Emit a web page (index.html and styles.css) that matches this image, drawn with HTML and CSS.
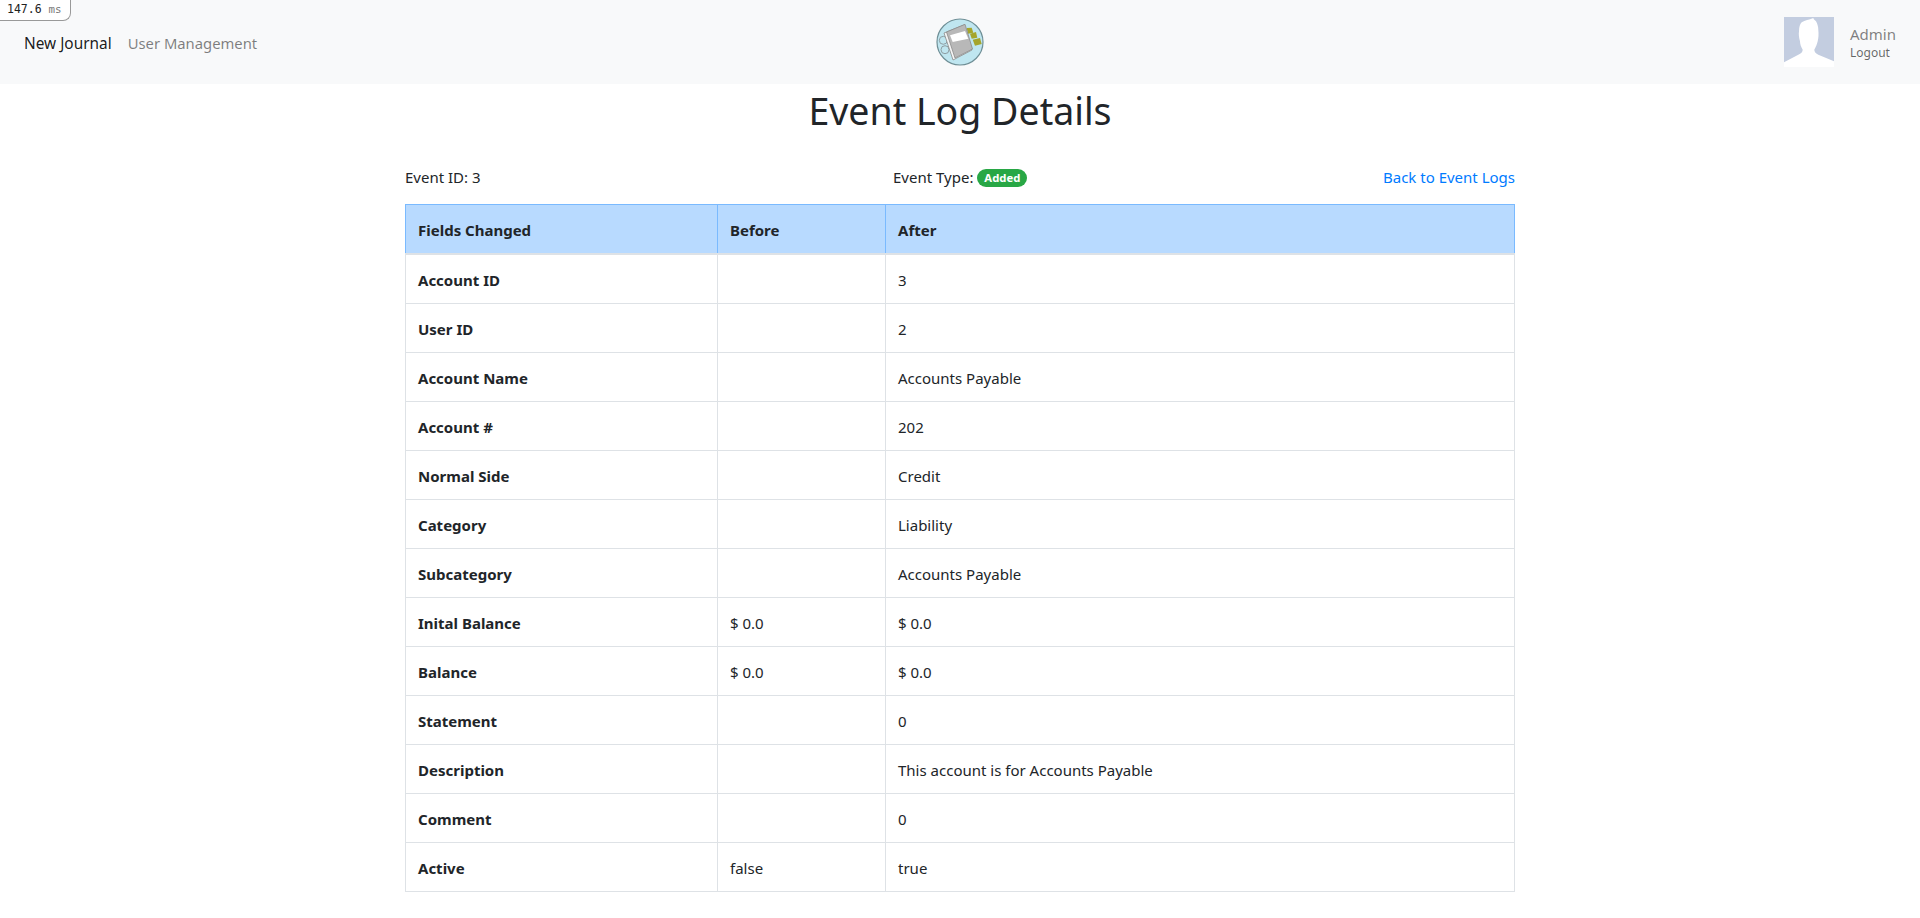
FILE: index.html
```html
<!DOCTYPE html>
<html lang="en">
  <head>
    <meta charset="UTF-8" />
    <title>Event Log Details</title>
    <link rel="stylesheet" href="styles.css">
  </head>
  <body>
    <div class="timer"><span class="timer-value">147.6</span> <span class="timer-unit">ms</span></div>
    <nav class="navbar">
      <ul class="nav-links">
        <li><a class="nav-link active" href="#">New Journal</a></li>
        <li><a class="nav-link" href="#">User Management</a></li>
      </ul>
      <a class="brand" href="#" aria-label="Home">
        <svg viewBox="0 0 48 48" width="48" height="48">
          <circle cx="24" cy="24" r="23" fill="#bfe6f0" stroke="#6f8f96" stroke-width="1.2" />
          <g fill="none" stroke="#8f9ea3" stroke-width="1">
            <circle cx="7.300" cy="22.300" r="4" />
            <circle cx="9" cy="31.700" r="4" />
          </g>
          <path d="M30.700 10 L35.700 9.700 L37.300 14.700 L32 15.700 Z" fill="#a5a52c" />
          <path d="M34 15.700 L40 14 L41.300 19.700 L35.700 20.700 Z" fill="#a5a52c" />
          <path d="M36.700 21.700 L44 20 L45.700 26 L39 27.700 Z" fill="#a5a52c" />
          <path d="M8 15 L28 7 L36 32 L17 42 Z" fill="#f4f4f4" stroke="#8a8a8a" stroke-width="0.8" />
          <path d="M10.500 14 L29 6.300 L36.500 31 L19 40 Z" fill="#b8b8b8" stroke="#8a8a8a" stroke-width="0.8" />
          <path d="M14 17.300 L29 13 L32.300 20.700 L16.700 24 Z" fill="#fff" />
        </svg>
      </a>
      <div class="user">
        <svg class="avatar" viewBox="0 0 50 50" width="50" height="50">
          <rect width="50" height="50" fill="#c3cde0" />
          <path d="M0 50 V45.300 L14.300 37.700 C17 36.500 18.700 35 18.700 32.700 C17 30 16 27 16 24.300 C15 21 14.500 17 15 14.300 C15 10 16 7 17.700 5.300 C21 3 25 3 29.300 1 C29.500 2.500 31 3 32 4.300 C33.500 7 34.300 10 34.300 12.700 C34.800 17 34.500 21 33.700 24.300 C33 27 32 30 30.300 32.700 C30.300 35 32 36.500 34.300 37.700 L50 44.300 V50 Z" fill="#fff" />
        </svg>
        <div class="user-text">
          <div class="user-name">Admin</div>
          <a class="user-logout" href="#">Logout</a>
        </div>
      </div>
    </nav>
    <main class="container">
      <h1>Event Log Details</h1>
      <div class="info-row">
        <div>Event ID: 3</div>
        <div>Event Type: <span class="badge">Added</span></div>
        <a class="back-link" href="#">Back to Event Logs</a>
      </div>
      <table class="log-table">
        <thead>
          <tr>
            <th class="col-field">Fields Changed</th>
            <th class="col-before">Before</th>
            <th>After</th>
          </tr>
        </thead>
        <tbody>
          <tr><th>Account ID</th><td></td><td>3</td></tr>
          <tr><th>User ID</th><td></td><td>2</td></tr>
          <tr><th>Account Name</th><td></td><td>Accounts Payable</td></tr>
          <tr><th>Account #</th><td></td><td>202</td></tr>
          <tr><th>Normal Side</th><td></td><td>Credit</td></tr>
          <tr><th>Category</th><td></td><td>Liability</td></tr>
          <tr><th>Subcategory</th><td></td><td>Accounts Payable</td></tr>
          <tr><th>Inital Balance</th><td>$ 0.0</td><td>$ 0.0</td></tr>
          <tr><th>Balance</th><td>$ 0.0</td><td>$ 0.0</td></tr>
          <tr><th>Statement</th><td></td><td>0</td></tr>
          <tr><th>Description</th><td></td><td>This account is for Accounts Payable</td></tr>
          <tr><th>Comment</th><td></td><td>0</td></tr>
          <tr><th>Active</th><td>false</td><td>true</td></tr>
        </tbody>
      </table>
    </main>
  </body>
</html>
```

FILE: styles.css
```css
body {
  margin: 0;
  background-color: #fff;
  font-family: "Noto Sans", "Open Sans", sans-serif;
  font-size: 15px;
  line-height: 24px;
  color: #212529;
}
a {
  text-decoration: none;
}
.timer {
  position: absolute;
  top: 0;
  left: 0;
  box-sizing: border-box;
  width: 71px;
  height: 21px;
  padding-left: 7px;
  background-color: #fff;
  border: 1px solid #999;
  border-top: none;
  border-left: none;
  border-bottom-right-radius: 8px;
  font-family: "DejaVu Sans Mono", monospace;
  font-size: 11.500px;
  line-height: 19px;
  color: #222;
}
.timer-unit {
  font-size: 10.800px;
  color: #777;
}
.navbar {
  display: grid;
  grid-template-columns: 1fr auto 1fr;
  align-items: center;
  height: 84px;
  padding: 0 16px;
  box-sizing: border-box;
  background-color: #f8f9fa;
}
.nav-links {
  display: flex;
  align-items: baseline;
  margin: 2px 0 0;
  padding: 0;
  list-style: none;
}
.nav-link {
  display: block;
  padding: 8px;
  font-size: 14.800px;
  color: rgba(0, 0, 0, 0.5);
}
.nav-link.active {
  font-size: 15.400px;
  color: rgba(0, 0, 0, 0.9);
}
.brand {
  display: flex;
}
.user {
  display: flex;
  justify-content: flex-end;
  align-items: center;
  gap: 16px;
  padding-right: 8px;
}
.user-name {
  font-size: 15px;
  line-height: 20px;
  color: rgba(0, 0, 0, 0.5);
}
.user-logout {
  display: block;
  margin-top: 1px;
  font-size: 12px;
  line-height: 16px;
  color: rgba(0, 0, 0, 0.6);
}
.container {
  width: 1110px;
  margin: 0 auto;
}
h1 {
  margin: 3px 0 0;
  font-size: 37.500px;
  font-weight: 400;
  line-height: 48px;
  text-align: center;
}
.info-row {
  display: grid;
  grid-template-columns: 1fr 1fr 1fr;
  margin-top: 30px;
  margin-bottom: 15px;
}
.info-row > div:nth-child(2) {
  padding-left: 118px;
}
.back-link {
  text-align: right;
  color: #007bff;
}
.badge {
  display: inline-block;
  padding: 0 7px;
  border-radius: 10px;
  background-color: #28a745;
  color: #fff;
  font-size: 11.300px;
  font-weight: 700;
  line-height: 18px;
  vertical-align: 1px;
}
.log-table {
  width: 100%;
  border-collapse: collapse;
  table-layout: fixed;
}
.log-table th,
.log-table td {
  height: 24px;
  padding: 13px 12px 11px;
  border: 1px solid #dee2e6;
  text-align: left;
  font-weight: 400;
}
.log-table th {
  font-weight: 700;
}
.log-table thead th {
  background-color: #b8daff;
  border-color: #7abaff;
  border-bottom: 2px solid #dee2e6;
}
.col-field {
  width: 287px;
}
.col-before {
  width: 143px;
}
```
